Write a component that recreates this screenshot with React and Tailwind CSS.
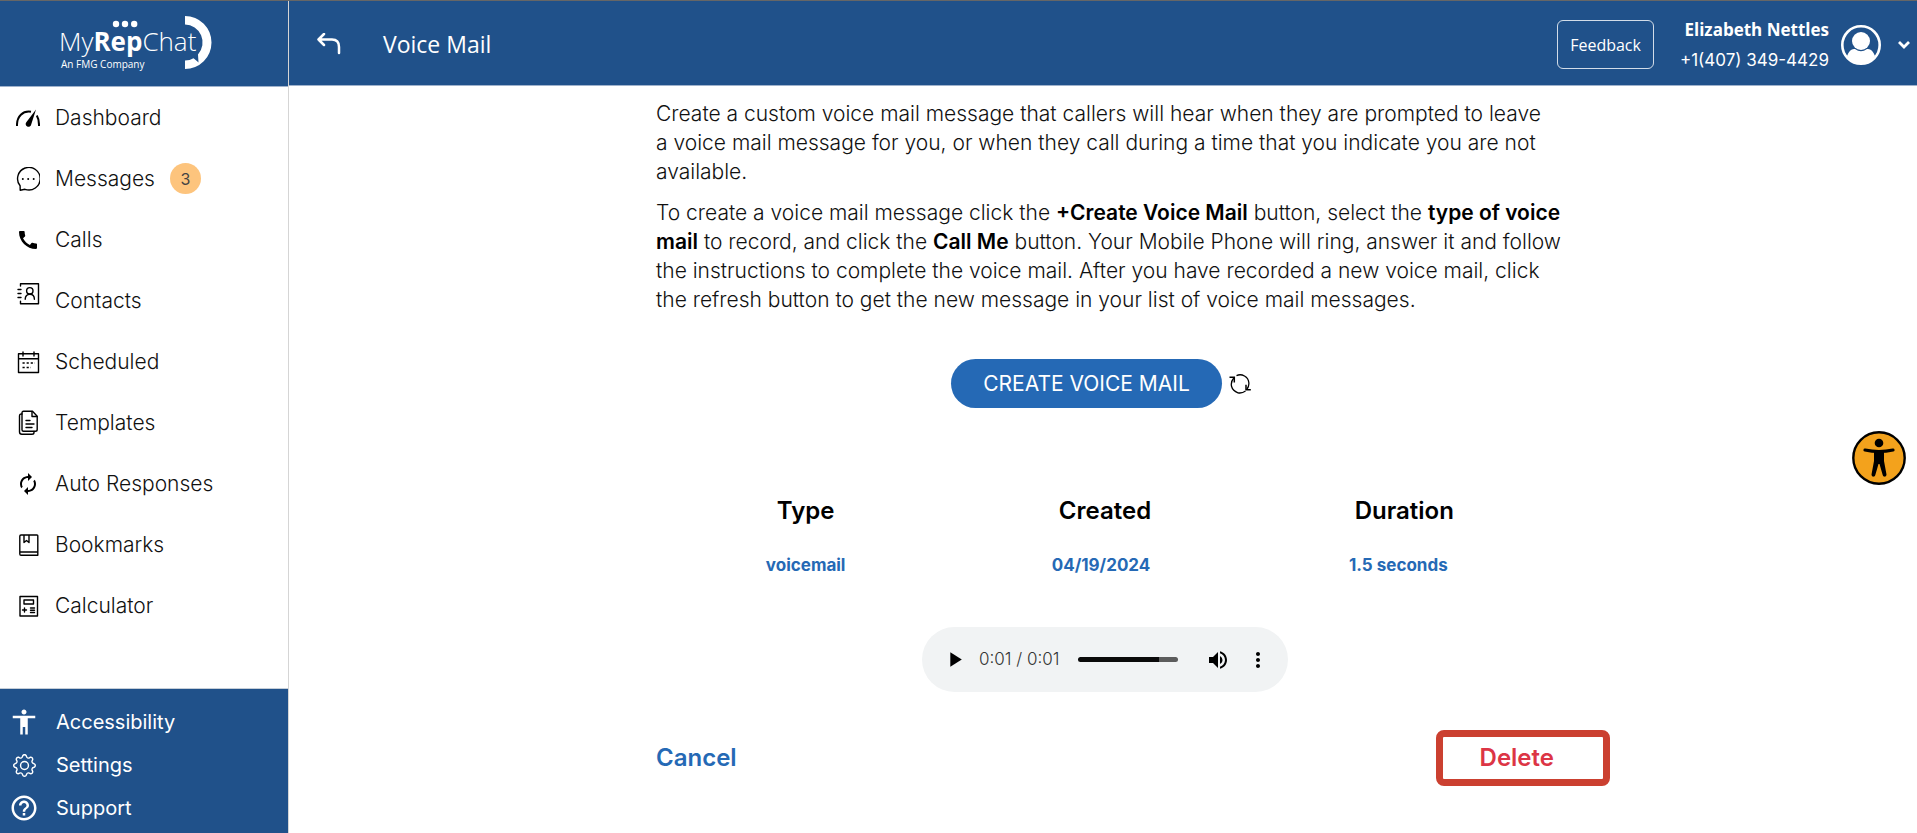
import { MdCall, MdAutorenew, MdAccessibility, MdHelpOutline, MdPlayArrow, MdVolumeUp, MdMoreVert } from "react-icons/md";
import { BsGear } from "react-icons/bs";

const line = { fill: "none", stroke: "currentColor", strokeWidth: 1.4, strokeLinecap: "round", strokeLinejoin: "round" };

function DashboardIcon() {
  return (
    <svg width="24" height="24" viewBox="0 0 24 24" aria-hidden="true">
      <path d="M1 20C.6 10 7 4.600 15 5.800" fill="none" stroke="currentColor" strokeWidth="2" />
      <path d="M20 3.500L15.200 18.500a2.800 2.800 0 1 1-4.900-2.300z" fill="currentColor" />
      <path d="M20.800 9.500Q23.200 13.500 23 20" fill="none" stroke="currentColor" strokeWidth="2" />
    </svg>
  );
}

function MessagesIcon() {
  return (
    <svg width="24" height="24" viewBox="0 0 24 24" aria-hidden="true">
      <path d="M4.200 23.200l-.1-4.400A11.300 11.300 0 1 1 9 22.300z" {...line} />
      <circle cx="6.800" cy="12" r="1" />
      <circle cx="12.200" cy="12" r="1" />
      <circle cx="17.700" cy="12" r="1" />
    </svg>
  );
}

function ContactsIcon() {
  return (
    <svg width="24" height="40" viewBox="0 0 24 40" aria-hidden="true">
      <g {...line}>
        <path d="M4.500 5V2.700h18v20h-18v-2.500" />
        <path d="M2 8.500h3M2 12.500h3M2 16.500h3" />
        <circle cx="13.800" cy="9.800" r="3.200" />
        <path d="M9.200 18.200c0-3.200 2-5 4.600-5s4.600 1.800 4.600 5" />
      </g>
    </svg>
  );
}

function ScheduledIcon() {
  return (
    <svg width="24" height="24" viewBox="0 0 24 24" aria-hidden="true">
      <path d="M2.500 3.800h20v18.700h-20zM2.500 8.800h20M7 2v4M18 2v4" {...line} />
      <path d="M6.500 13h12.500M6.500 17.500h8.500" fill="none" stroke="currentColor" strokeWidth="1.600" strokeDasharray="2.200 1.900" />
    </svg>
  );
}

function TemplatesIcon() {
  return (
    <svg width="24" height="26" viewBox="0 0 24 26" aria-hidden="true">
      <g {...line}>
        <path d="M7.500 1.300h9l4.700 5v13.200q0 1.800-1.800 1.800H7.500q-1.500 0-1.500-1.500v-17q0-1.500 1.500-1.500z" />
        <path d="M16 1.500v5h5" />
        <path d="M6 4H5Q3.500 4 3.500 5.800v16q0 2.500 2.300 2.500H16q2 0 2-1.800v-1" />
        <path d="M10 10.500h4M10 14h8M10 17.500h6" />
      </g>
    </svg>
  );
}

function BookmarksIcon() {
  return (
    <svg width="24" height="24" viewBox="0 0 24 24" aria-hidden="true">
      <path d="M5 2h16q.8 0 .8.800v19.400H5q-1.200 0-1.200-1.200V3.200Q3.800 2 5 2zM3.800 19h18M8 2v7.500l2.500-2 2.500 2V2" {...line} />
    </svg>
  );
}

function CalculatorIcon() {
  return (
    <svg width="24" height="24" viewBox="0 0 24 24" aria-hidden="true">
      <path d="M4 2.500h17.500v19.500H4zM8 6h9.500v4H8zM6.500 16h4M8.500 14v4M14.500 14h4M14.500 18.500h4M14.500 16.200h4" {...line} />
    </svg>
  );
}

const navItems = [
  { label: "Dashboard", icon: <DashboardIcon /> },
  { label: "Messages", icon: <MessagesIcon />, badge: 3 },
  { label: "Calls", icon: <MdCall size={24} /> },
  { label: "Contacts", icon: <ContactsIcon /> },
  { label: "Scheduled", icon: <ScheduledIcon /> },
  { label: "Templates", icon: <TemplatesIcon /> },
  { label: "Auto Responses", icon: <MdAutorenew size={24} /> },
  { label: "Bookmarks", icon: <BookmarksIcon /> },
  { label: "Calculator", icon: <CalculatorIcon /> },
];

const footerItems = [
  { label: "Accessibility", icon: <MdAccessibility size={30} /> },
  { label: "Settings", icon: <BsGear size={23} /> },
  { label: "Support", icon: <MdHelpOutline size={30} /> },
];

function Logo() {
  return (
    <svg width="156" height="58" viewBox="0 0 156 58" fill="white" role="img" aria-label="MyRepChat, An FMG Company" className="font-['Open_Sans',sans-serif]">
      <circle cx="57" cy="9" r="3.200" />
      <circle cx="66" cy="9" r="3.200" />
      <circle cx="75.200" cy="9" r="3.200" />
      <text x="0" y="36" fontSize="26" fontWeight="300">
        My<tspan fontWeight="700">Rep</tspan>Chat
      </text>
      <text x="2" y="53" fontSize="10" fontWeight="500">An FMG Company</text>
      <path d="M126 1A26.500 26.500 0 0 1 126 54V45.500Q131 45.500 134.500 43.200Q138 46 139.500 47.500L139 39.500A18 18 0 0 0 126 9.500z" />
    </svg>
  );
}

function Sidebar() {
  return (
    <aside className="flex w-[289px] shrink-0 flex-col border-r border-[#d5d5d5] text-xl">
      <a href="#home" className="flex h-[86px] items-center border-b border-[#9fb2cc] bg-[#20518a] pl-[59px]">
        <Logo />
      </a>
      <nav aria-label="Main" className="grow text-[21px] font-light text-[#111]">
        {navItems.map((item) => (
          <a key={item.label} href={"#" + item.label} className="flex h-[61px] items-center gap-[15px] pl-4">
            <span className="flex w-6 justify-center text-black">{item.icon}</span>
            {item.label}
            {item.badge && (
              <span className="flex size-[31px] items-center justify-center rounded-full bg-[#fdc47d] text-base font-normal text-[#444]">
                {item.badge}
              </span>
            )}
          </a>
        ))}
      </nav>
      <nav aria-label="Help" className="flex h-[145px] flex-col justify-center border-t border-[#c5ced8] bg-[#20518a] pt-2 text-white">
        {footerItems.map((item) => (
          <a key={item.label} href={"#" + item.label} className="flex h-[43px] items-center gap-4 pl-2">
            <span className="flex w-8 justify-center">{item.icon}</span>
            {item.label}
          </a>
        ))}
      </nav>
    </aside>
  );
}

function Header() {
  return (
    <header className="flex h-[85px] items-center border-b border-[#9fb2cc] bg-[#20518a] pt-[3px] pr-[6px] pl-7 font-['Open_Sans',sans-serif] text-white">
      <button type="button" aria-label="Back">
        <svg width="24" height="24" viewBox="0 0 24 24" fill="none" stroke="white" strokeWidth="2.500" strokeLinecap="round" strokeLinejoin="round" aria-hidden="true">
          <path d="M7 1L1.500 6.500L7 12M1.500 6.500H15Q22 6.500 22 14V20" />
        </svg>
      </button>
      <h1 className="ml-[42px] grow text-[23px]">Voice Mail</h1>
      <button type="button" className="h-[49px] rounded-md border border-white/80 px-3 text-base">
        Feedback
      </button>
      <div className="ml-[26px] text-right text-[17px] leading-[31px]">
        <div className="font-bold">Elizabeth Nettles</div>
        <div className="font-[Inter,sans-serif]">+1(407) 349-4429</div>
      </div>
      <button type="button" aria-label="Account menu" className="ml-3 flex items-center gap-4">
        <svg width="40" height="40" viewBox="0 0 40 40" aria-hidden="true">
          <circle cx="20" cy="20" r="18.700" fill="none" stroke="white" strokeWidth="2.600" />
          <circle cx="20" cy="16" r="9" fill="white" />
          <path d="M6 31Q9 23 14 24Q20 28.500 26 24Q31 23 34 31Q29 38.500 20 38.500T6 31z" fill="white" />
        </svg>
        <svg width="14" height="10" viewBox="0 0 14 10" fill="none" stroke="white" strokeWidth="2.800" aria-hidden="true">
          <path d="M2 2L7 7L12 2" />
        </svg>
      </button>
    </header>
  );
}

function AudioPlayer() {
  return (
    <div className="mx-auto flex h-[65px] w-[366px] items-center rounded-full bg-[#f1f3f4] pr-[18px] pl-5">
      <button type="button" aria-label="Play">
        <MdPlayArrow size={25} />
      </button>
      <span className="ml-3 w-[85px] text-[17px] leading-none font-light whitespace-nowrap text-[#333]">0:01 / 0:01</span>
      <input
        type="range"
        aria-label="Playback position"
        defaultValue="81"
        className="ml-[14px] h-[5px] w-[100px] appearance-none rounded-full bg-linear-to-r from-[#0a0a0a] from-81% to-[#5c5c5c] to-81% [&::-webkit-slider-thumb]:size-0 [&::-webkit-slider-thumb]:appearance-none"
      />
      <button type="button" aria-label="Mute" className="ml-auto">
        <MdVolumeUp size={24} />
      </button>
      <button type="button" aria-label="More options" className="ml-4">
        <MdMoreVert size={24} />
      </button>
    </div>
  );
}

export default function App() {
  return (
    <div className="flex min-h-screen border-t border-[#666] bg-white font-[Inter,sans-serif] text-black">
      <Sidebar />
      <div className="flex min-w-0 grow flex-col">
        <Header />
        <main className="mx-auto w-full max-w-[902px] pt-[13px] pl-1">
          <div className="-mr-2 space-y-3 text-[21px] leading-[29px] font-light text-[#111]">
            <p>
              Create a custom voice mail message that callers will hear when they are prompted to leave a&nbsp;voice mail
              message for you, or when they call during a time that you indicate you are not available.
            </p>
            <p>
              To create a voice mail message click the <b className="font-semibold text-black">+Create Voice Mail</b> button,
              select the <b className="font-semibold text-black">type of voice mail</b> to record, and click the{" "}
              <b className="font-semibold text-black">Call Me</b> button. Your Mobile Phone will ring, answer it and follow the
              instructions to complete the voice mail. After you have recorded a new voice mail, click the refresh button to
              get the new message in your list of voice mail messages.
            </p>
          </div>

          <div className="mt-[45px] flex items-center justify-center gap-[7px] pr-2">
            <button type="button" className="h-[49px] rounded-full bg-[#2569b5] px-8 text-[21px] text-white">
              CREATE VOICE MAIL
            </button>
            <button type="button" aria-label="Refresh">
              <svg width="22" height="22" viewBox="0 0 22 22" fill="none" stroke="black" strokeWidth="1.300" aria-hidden="true">
                <path d="M4.800 5Q1.400 9 2.600 13.500T9 19.800Q13 20.600 16.500 18M7.500 2.600Q11.500.7 15.500 3T19.800 9.500Q20.300 13 17.800 16.500" />
                <path d="M.5 4.300H5.300V9.500M21.800 16.800H17V11.800" strokeWidth="1.500" />
              </svg>
            </button>
          </div>

          <table className="mt-[83px] w-full table-fixed text-center">
            <thead>
              <tr className="h-[40px] text-2xl">
                <th className="font-semibold">Type</th>
                <th className="font-semibold">Created</th>
                <th className="font-semibold">Duration</th>
              </tr>
            </thead>
            <tbody>
              <tr className="h-[70px] text-[17px] font-bold text-[#2569b5]">
                <td>voicemail</td>
                <td className="pr-2">04/19/2024</td>
                <td className="pr-3">1.5 seconds</td>
              </tr>
            </tbody>
          </table>

          <div className="mt-[26px]">
            <AudioPlayer />
          </div>

          <div className="mt-[50px] flex justify-between text-2xl leading-8 font-semibold">
            <button type="button" className="text-[#2569b5]">Cancel</button>
            <button type="button" className="relative text-[#dc3545]">
              Delete
              <span className="absolute -inset-y-3 -right-14 -left-11 rounded-lg border-[7px] border-[#cb4030]" />
            </button>
          </div>
        </main>
      </div>

      <button type="button" aria-label="Accessibility options" className="fixed top-[431px] right-[11px]">
        <svg width="54" height="54" viewBox="0 0 54 54" aria-hidden="true">
          <circle cx="27" cy="27" r="25.700" fill="#f3a21c" stroke="black" strokeWidth="2.400" />
          <circle cx="27" cy="12" r="4.300" />
          <path d="M13 19Q27 22 41 19" fill="none" stroke="black" strokeWidth="3.200" strokeLinecap="round" />
          <path d="M22 19.500H32V30L34.500 43.500Q34.500 46 32.300 45.600Q31 45.500 30.700 44L27.500 33H26.500L23.300 44Q23 45.500 21.700 45.600Q19.500 46 19.500 43.500L22 30z" />
        </svg>
      </button>
    </div>
  );
}
